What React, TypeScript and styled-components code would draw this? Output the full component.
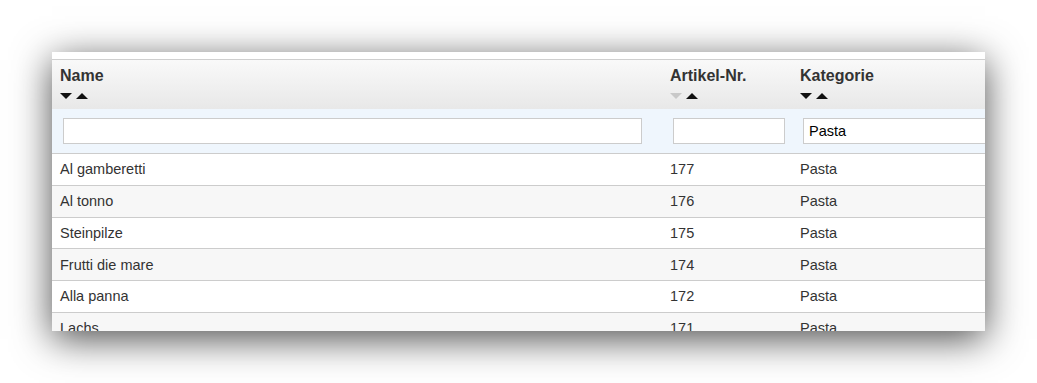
import styled, { createGlobalStyle } from "styled-components";

const GlobalStyle = createGlobalStyle`
  html, body {
    margin: 0;
    background: #ffffff;
    font-family: "Liberation Sans", Arial, sans-serif;
  }
`;

type Dir = "asc" | "desc";

const columns = [
  { label: "Name", width: 610, input: 579, value: "", down: true },
  { label: "Artikel-Nr.", width: 130, input: 112, value: "", down: false },
  { label: "Kategorie", width: 300, input: 300, value: "Pasta", down: true },
];

const rows = [
  ["Al gamberetti", "177", "Pasta"],
  ["Al tonno", "176", "Pasta"],
  ["Steinpilze", "175", "Pasta"],
  ["Frutti die mare", "174", "Pasta"],
  ["Alla panna", "172", "Pasta"],
  ["Lachs", "171", "Pasta"],
];

const App = () => {
  return (
    <Page>
      <GlobalStyle />
      <Card>
        <Grid>
          <HeaderRow>
            {columns.map((c) => (
              <HeadCell key={c.label} $width={c.width}>
                <HeadLabel>{c.label}</HeadLabel>
                <Sorters>
                  <Arrow $dir="desc" $active={c.down} />
                  <Arrow $dir="asc" $active />
                </Sorters>
              </HeadCell>
            ))}
          </HeaderRow>
          <FilterRow>
            {columns.map((c) => (
              <FilterCell key={c.label} $width={c.width}>
                <FilterInput $width={c.input} defaultValue={c.value} />
              </FilterCell>
            ))}
          </FilterRow>
          {rows.map((r, i) => (
            <BodyRow key={r[0]} $odd={i % 2 === 1}>
              {r.map((v, j) => (
                <BodyCell key={j} $width={columns[j].width}>
                  {v}
                </BodyCell>
              ))}
            </BodyRow>
          ))}
        </Grid>
      </Card>
    </Page>
  );
};

const Page = styled.div`
  padding: 52px;
  height: 383px;
  box-sizing: border-box;
`;

const Card = styled.div`
  width: 933px;
  height: 279px;
  background: #fff;
  overflow: hidden;
  box-shadow: 0 8px 36px rgba(0, 0, 0, 0.7);
  padding-top: 7px;
  box-sizing: border-box;
`;

const Grid = styled.div`
  width: 1040px;
  border-top: 1px solid #cfcfcf;
`;

const Row = styled.div`
  display: flex;
`;

const HeaderRow = styled(Row)`
  height: 49px;
  background: linear-gradient(#f9f9f9, #e8e8e8);
`;

const HeadCell = styled.div<{ $width: number }>`
  width: ${(p) => p.$width}px;
  flex: none;
  box-sizing: border-box;
  padding: 7px 8px 0;
`;

const HeadLabel = styled.div`
  font-weight: bold;
  font-size: 16px;
  line-height: 18px;
  color: #333;
`;

const Sorters = styled.div`
  display: flex;
  gap: 4px;
  margin-top: 8px;
`;

const Arrow = styled.span<{ $dir: Dir; $active: boolean }>`
  width: 0;
  height: 0;
  border-left: 6px solid transparent;
  border-right: 6px solid transparent;
  ${(p) =>
    p.$dir === "desc"
      ? `border-top: 6px solid ${p.$active ? "#111" : "#c8c8c8"};`
      : `border-bottom: 6px solid ${p.$active ? "#111" : "#c8c8c8"};`}
`;

const FilterRow = styled(Row)`
  height: 44px;
  background: #eff6fd;
  border-bottom: 1px solid #cccccc;
  align-items: center;
`;

const FilterCell = styled.div<{ $width: number }>`
  width: ${(p) => p.$width}px;
  flex: none;
  box-sizing: border-box;
  padding-left: 11px;
`;

const FilterInput = styled.input<{ $width: number }>`
  width: ${(p) => p.$width}px;
  height: 26px;
  box-sizing: border-box;
  border: 1px solid #cccccc;
  background: #fff;
  padding: 0 5px;
  font-family: "Liberation Sans", Arial, sans-serif;
  font-size: 14.5px;
  color: #000;
  outline: none;
`;

const BodyRow = styled(Row)<{ $odd: boolean }>`
  height: 31.75px;
  box-sizing: border-box;
  align-items: center;
  background: ${(p) => (p.$odd ? "#f7f7f7" : "#ffffff")};
  border-bottom: 1px solid #cccccc;
`;

const BodyCell = styled.div<{ $width: number }>`
  width: ${(p) => p.$width}px;
  flex: none;
  box-sizing: border-box;
  padding-left: 8px;
  font-size: 14.5px;
  color: #333;
`;

export default App;
